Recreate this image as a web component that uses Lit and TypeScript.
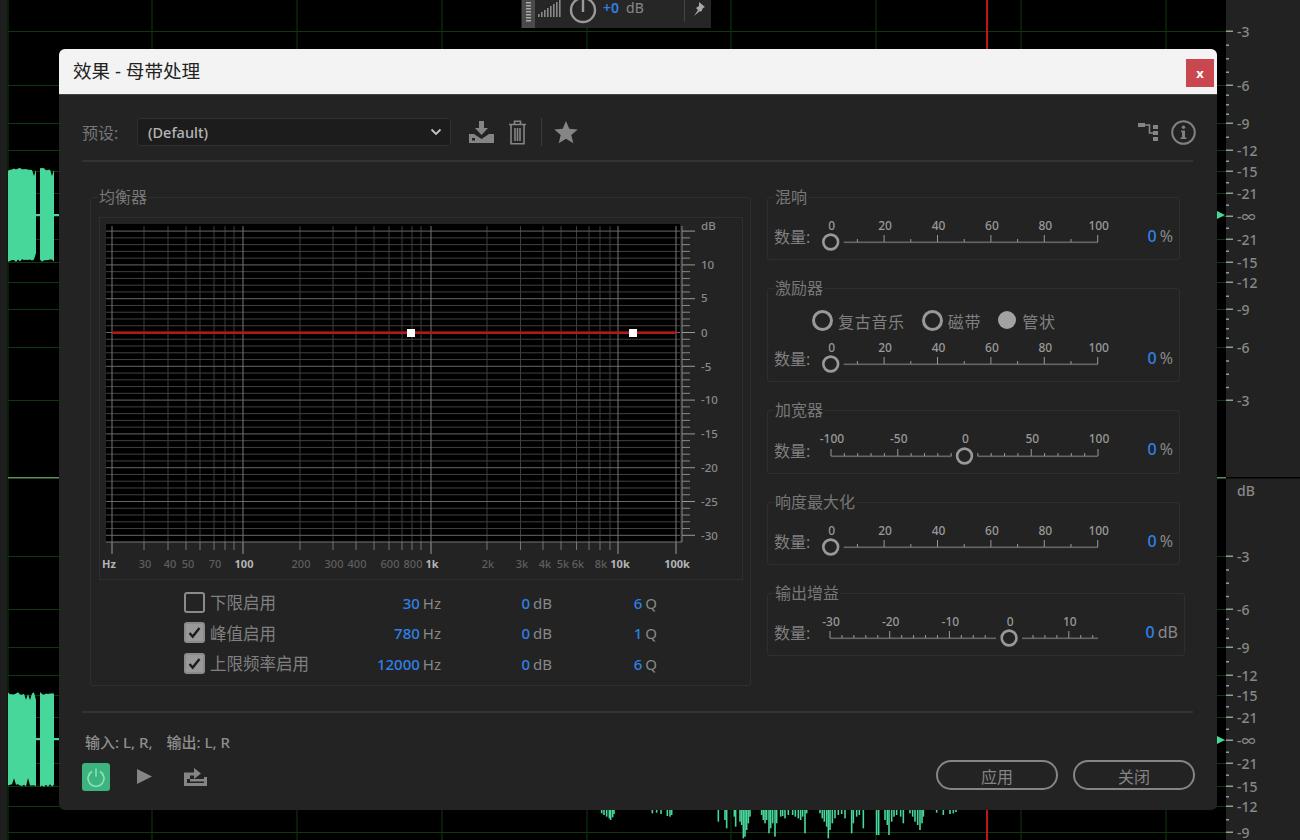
import { LitElement, html, css, svg } from "lit";
import { customElement } from "lit/decorators.js";

const rulerMajors: [number, string][] = [
  [31,"-3"],[85,"-6"],[123,"-9"],[150,"-12"],[171,"-15"],[193,"-21"],[216,"-∞"],[239,"-21"],[262,"-15"],[282,"-12"],[309,"-9"],[347,"-6"],[400,"-3"],
  [556,"-3"],[609,"-6"],[647,"-9"],[675,"-12"],[695,"-15"],[717,"-21"],[740,"-∞"],[763,"-21"],[786,"-15"],[806,"-12"],[832,"-9"],
];
const gridV = [7.5,151.5,296.5,441.5,586.5,730.5,875.5,1020.5,1165.5];

function jitter(i: number) { return Math.sin(i * 12.9898) * 43758.5453 % 1; }

function block(x0: number, x1: number, top: number, bottom: number, seed: number) {
  let up = "", down = "";
  let i = seed;
  for (let x = x0; x <= x1; x += 2) {
    const a = Math.abs(jitter(i++));
    const b = Math.abs(jitter(i++));
    up += `${x},${(top + a * 3 + (a > 0.93 ? 5 : 0)).toFixed(1)} `;
    down = `${x},${(bottom - b * 3 - (b > 0.93 ? 6 : 0)).toFixed(1)} ` + down;
  }
  return up + down;
}

const spikes: [number, number][] = [
  [35,40],[42,45],[50,50],[58,55],[62,60],[68,52],[72,42],
  [187,40],[200,38],[213,42],[232,48],[240,50],[245,45],
  [385,65],[405,60],[410,85],[433,50],[437,80],[450,65],[455,75],[460,115],[465,110],[470,90],[475,70],[480,50],
  [515,45],[520,60],[525,70],[530,60],[537,100],[542,85],[548,70],[555,110],[560,70],
  [572,50],[578,48],[585,55],[595,45],[608,45],[616,50],[625,55],[632,60],[638,50],[645,100],[650,40],
  [690,40],[697,55],[703,65],[710,80],[715,115],[720,90],[727,70],[735,55],[745,45],[755,42],[765,55],[785,100],[790,70],[800,50],[808,45],[820,85],
  [860,105],[866,105],[885,60],[892,75],[897,105],[905,65],[912,50],[920,45],[932,50],[940,70],[960,40],[968,50],[975,65],[983,75],[990,90],[996,70],[1000,50],
  [1040,38],[1060,45],[1080,42],[1090,40],[1098,36],
];

function scene() {
  const ticks = rulerMajors.map(([y, t]) => svg`
    <rect x="1226" y="${y - 0.5}" width="7" height="1.5" fill="#999"/>
    <text x="1237" y="${y + 6}" class="rl">${t}</text>`);
  const minors: unknown[] = [];
  for (let i = 0; i < rulerMajors.length - 1; i++) {
    const a = rulerMajors[i][0], b = rulerMajors[i + 1][0];
    if (b - a > 120) continue;
    const n = b - a > 30 ? 3 : 1;
    for (let k = 1; k <= n; k++) {
      minors.push(svg`<rect x="1226" y="${a + ((b - a) * k) / (n + 1)}" width="3" height="1.5" fill="#999"/>`);
    }
  }
  return html`<svg class="scene" viewBox="0 0 1300 840" width="1300" height="840" aria-hidden="true">
    <rect width="1300" height="840" fill="#000"/>
    <rect width="7" height="840" fill="#1e1e1e"/>
    ${rulerMajors.map(([y]) => svg`<rect x="8" y="${y}" width="1218" height="1" fill="#0d3a0d"/>`)}
    ${gridV.map((x) => svg`<rect x="${x}" y="0" width="1" height="840" fill="#0d3a0d"/>`)}
    <rect x="8" y="477" width="1218" height="1.5" fill="#5c8f5c"/>
    <rect x="986" y="0" width="2" height="840" fill="#c1151c"/>
    <polygon points="${block(8, 36, 168, 262, 1)}" fill="#47d79b"/>
    <polygon points="${block(40, 55, 168, 262, 61)}" fill="#47d79b"/>
    <polygon points="${block(8, 36, 692, 787, 91)}" fill="#47d79b"/>
    <polygon points="${block(40, 55, 692, 787, 151)}" fill="#47d79b"/>
    <rect x="36" y="214" width="24" height="2" fill="#47d79b"/>
    <rect x="36" y="738" width="24" height="2" fill="#47d79b"/>
    ${spikes.map(([px, py]) => svg`<rect x="${590 + px / 3 - 0.8}" y="808" width="1.6" height="${2 + (py - 30) / 3}" fill="#47d79b"/>`)}
    <polygon points="1217,211 1225,215 1217,219" fill="#47d79b"/>
    <polygon points="1217,736 1225,740 1217,744" fill="#47d79b"/>
    <rect x="1226" width="74" height="840" fill="#222"/>
    <rect x="1226" y="477" width="74" height="1.5" fill="#000"/>
    ${minors}
    ${ticks}
    <text x="1237" y="496" class="rl">dB</text>
    <rect x="521" width="190" height="28" fill="#262626"/>
    <rect x="522" width="13" height="28" fill="#4a4a4a"/>
    ${[2,5,8,11,14,17,20].map((y) => svg`<rect x="526" y="${y}" width="5" height="1.5" fill="#aaa"/>`)}
    ${[0,1,2,3,4,5,6,7].map((i) => svg`<rect x="${538 + i * 3}" y="${14 - i * 2}" width="1.6" height="${3 + i * 2}" fill="#888"/>`)}
    <circle cx="583" cy="10" r="12" fill="none" stroke="#999" stroke-width="2.4"/>
    <rect x="581.8" y="-2" width="2.4" height="14" fill="#999"/>
    <text x="603" y="13" class="tb"><tspan fill="#2f80e6" font-weight="600">+0</tspan><tspan fill="#888" dx="7">dB</tspan></text>
    <rect x="684" width="1" height="22" fill="#444"/>
    <path d="M699 2l6 5-2 1-2 4-1-1-6 5 4-6-2-2 3-2z" fill="#aaa"/>
  </svg>`;
}

type SliderCfg = { x0: number; per: number; min: number; max: number; minor: number; major: number; labels: number[]; value: number; thumbY?: number };

function slider(c: SliderCfg) {
  const y = c.thumbY ?? 24;
  const xOf = (v: number) => c.x0 + (v - c.min) * c.per;
  const thumbX = xOf(c.value);
  const end = 1098;
  const ticks: unknown[] = [];
  for (let v = c.min; v <= c.max + 0.01; v += c.minor) {
    const x = xOf(v);
    if (Math.abs(x - thumbX) < 13) continue;
    const maj = Math.abs(((v - c.min) % c.major)) < 0.01;
    ticks.push(svg`<rect x="${x - 0.5}" y="${y - (maj ? 7 : 3)}" width="1" height="${maj ? 7 : 3}" fill="#999"/>`);
  }
  return html`<svg class="slider" viewBox="820 0 290 ${y + 14}" width="290" height="${y + 14}" aria-hidden="true">
    ${thumbX - 13 > c.x0 ? svg`<rect x="${c.x0}" y="${y - 0.5}" width="${thumbX - 13 - c.x0}" height="1.6" fill="#666"/>` : ""}
    <rect x="${thumbX + 13}" y="${y - 0.5}" width="${end - thumbX - 13}" height="1.6" fill="#666"/>
    ${ticks}
    ${c.labels.map((v) => svg`<text x="${xOf(v) + 1}" y="12" text-anchor="middle" class="sl">${v}</text>`)}
    <circle cx="${thumbX}" cy="${y}" r="7.4" fill="#232323" stroke="#999" stroke-width="2.6"/>
  </svg>`;
}

const pct: SliderCfg = { x0: 830.7, per: 2.67, min: 0, max: 100, minor: 10, major: 20, labels: [0,20,40,60,80,100], value: 0 };
const wide: SliderCfg = { x0: 831, per: 1.335, min: -100, max: 100, minor: 10, major: 50, labels: [-100,-50,0,50,100], value: 0, thumbY: 25 };
const gain: SliderCfg = { x0: 830, per: 5.97, min: -30, max: 14.7, minor: 2, major: 10, labels: [-30,-20,-10,0,10], value: 0 };

function graph() {
  const dbY = (d: number) => 332.5 - d * 6.76;
  const minorF: number[] = [144,168,186,200,214,225,234,300,333,356,374,389,402,412,421,487,520.5,543,561,576.5,589,600,610];
  const majorF = [112,243,431,618,676];
  const hLines: unknown[] = [];
  const rTicks: unknown[] = [];
  for (let d = 15; d >= -30; d--) {
    const maj = d % 5 === 0;
    const y = dbY(d);
    hLines.push(svg`<rect x="106" y="${y - 0.5}" width="574" height="1" fill="${maj ? "#666" : "#414141"}"/>`);
    rTicks.push(svg`<rect x="682" y="${y - 0.5}" width="${maj ? 13 : 8}" height="1" fill="${maj ? "#999" : "#888"}"/>`);
  }
  const labels: [number, string, boolean][] = [
    [109,"Hz",true],[145,"30",false],[170,"40",false],[188,"50",false],[215,"70",false],[244,"100",true],[301,"200",false],[334,"300",false],[357,"400",false],[390,"600",false],[413,"800",false],[432,"1k",true],[488,"2k",false],[522,"3k",false],[545,"4k",false],[563,"5k",false],[578,"6k",false],[601,"8k",false],[620,"10k",true],[677,"100k",true],
  ];
  const dbLabels: [number, string][] = [[230,"dB"],[268.5,"10"],[301.5,"5"],[336.5,"0"],[370.5,"-5"],[403.5,"-10"],[437.5,"-15"],[471.5,"-20"],[505.5,"-25"],[539.5,"-30"]];
  return html`<svg class="graph" viewBox="100 218 642 361" width="642" height="361" aria-hidden="true">
    <rect x="106" y="224" width="574" height="318" fill="#000"/>
    ${minorF.map((x) => svg`<rect x="${x - 0.5}" y="226" width="1" height="316" fill="#3d3d3d"/>
      <rect x="${x - 0.5}" y="542" width="1" height="8" fill="#777"/>`)}
    ${hLines}
    ${majorF.map((x) => svg`<rect x="${x - 0.5}" y="226" width="1" height="316" fill="#777"/>
      <rect x="${x - 0.5}" y="542" width="1" height="12" fill="#999"/>`)}
    <rect x="106" y="541.5" width="576" height="1" fill="#777"/>
    <rect x="681.5" y="226" width="1" height="316" fill="#888"/>
    ${rTicks}
    <rect x="112" y="331.4" width="564" height="2.6" fill="#b3191c"/>
    <rect x="407" y="329" width="8" height="8" fill="#fff"/>
    <rect x="629" y="329" width="8" height="8" fill="#fff"/>
    ${labels.map(([x, t, b]) => svg`<text x="${x}" y="568" text-anchor="middle" class="${b ? "gx maj" : "gx"}">${t}</text>`)}
    ${dbLabels.map(([y, t]) => svg`<text x="701" y="${y}" class="gy">${t}</text>`)}
  </svg>`;
}

@customElement("app-root")
export class AppRoot extends LitElement {
  static styles = css`
    :host { display: block; width: 1300px; height: 840px; position: relative; overflow: hidden; background: #000;
      font-family: "Noto Sans", "Noto Sans CJK SC", sans-serif; color: #888; }
    .scene { position: absolute; left: 0; top: 0; }
    .scene .rl { font-size: 14px; font-weight: 500; fill: #888; }
    .scene .tb { font-size: 14px; }
    .dialog { position: absolute; left: 59px; top: 49px; width: 1158px; height: 761px; background: #232323; border-radius: 6px;
      display: flex; flex-direction: column; overflow: hidden; }
    .title { height: 46px; flex: none; box-sizing: border-box; background: #f3f3f3; border-bottom: 1px solid #444; display: flex; align-items: center;
      justify-content: space-between; padding: 0 3px 0 14px; font-size: 18.6px; color: #222; }
    .title span { padding-bottom: 4px; }
    .close { width: 28px; height: 28px; margin-top: 2px; background: #c9484f; color: #fff; font-size: 13px; font-weight: 700; display: flex; align-items: center; justify-content: center; }
    .body { flex: 1; display: flex; flex-direction: column; padding: 23px 24px 19px 23px; min-height: 0; }
    .preset { display: flex; align-items: center; height: 28px; padding-bottom: 14px; border-bottom: 2px solid #333; flex: none; box-sizing: content-box; }
    .preset .lab { width: 55px; font-size: 16px; color: #777; }
    .select { width: 314px; height: 28px; box-sizing: border-box; background: #1c1c1c; border: 1px solid #2f2f2f; border-radius: 3px; display: flex; align-items: center;
      justify-content: space-between; padding: 0 8px 0 10px; font-size: 14.5px; color: #b5b5b5; font-weight: 500; }
    .tools { display: flex; align-items: center; gap: 14px; margin-left: 18px; flex: 1; }
    .vsep { width: 1px; height: 28px; background: #383838; margin-right: -2px; }
    .spacer { flex: 1; }
    .info { margin: 0 -3px 0 -2px; }
    .main { display: flex; gap: 16px; margin-top: 35px; padding-left: 8px; flex: none; }
    .group { position: relative; border: 1px solid #2f2f2f; border-radius: 3px; box-sizing: border-box; }
    .legend { position: absolute; left: 6px; top: -12px; background: #232323; padding: 0 1px; font-size: 16px; line-height: 22px; color: #777; }
    .eq > .legend { left: 7px; }
    .eq { width: 661px; height: 489px; padding: 19px 7px 0 8px; }
    .panel { width: 644px; height: 363px; box-sizing: border-box; border: 1px solid #2f2f2f; }
    .graph { display: block; }
    .graph .gx { font-size: 11px; fill: #5f5f5f; font-weight: 500; }
    .graph .gx.maj { fill: #b5b5b5; font-weight: 700; }
    .graph .gy { font-size: 11.5px; fill: #8a8a8a; font-weight: 500; }
    .eqrows { display: grid; grid-template-columns: 151px 106px 111px 105px; grid-auto-rows: 30.5px; margin: 7px 0 0 85px; align-items: center; }
    .eqrows .val { padding-top: 1px; }
    .check { display: flex; align-items: center; gap: 5px; font-size: 16.5px; color: #808080; white-space: nowrap; }
    .box { width: 21px; height: 21px; box-sizing: border-box; border: 2px solid #8a8a8a; border-radius: 3px; flex: none; }
    .box.on { background: #999; display: flex; align-items: center; justify-content: center; }
    .val { display: flex; justify-content: flex-end; align-items: baseline; gap: 3px; }
    .num { color: #2f80e6; font-size: 15px; font-weight: 500; }
    .unit { color: #888; font-size: 15px; }
    .col { display: flex; flex-direction: column; gap: 28px; width: 418px; }
    .fx { width: 413px; padding: 20px 0 3px 6px; }
    .fx.wide { width: 418px; }
    .row { display: flex; align-items: center; }
    .row .lab { width: 46px; font-size: 16px; color: #808080; white-space: nowrap; padding-bottom: 2px; }
    .row .val { flex: 1; padding: 0 6px 3px 0; }
    .row .val .unit, .row .val .num { font-size: 16px; }
    .slider { display: block; flex: none; }
    .slider .sl { font-size: 12px; fill: #999; font-weight: 500; }
    .radios { display: flex; align-items: center; height: 22px; padding: 0 0 9px 38px; font-size: 16px; color: #808080; }
    .ring { width: 21px; height: 21px; box-sizing: border-box; border: 3px solid #999; border-radius: 50%; margin-right: 5px; flex: none; }
    .dot { width: 18px; height: 18px; border-radius: 50%; background: #a2a2a2; margin-right: 6px; flex: none; }
    .radios span.t { margin-right: 17px; padding-top: 2px; letter-spacing: 0.7px; white-space: nowrap; }
    .hr { height: 2px; background: #333; margin-top: 25px; flex: none; }
    .io { display: flex; gap: 14px; margin: 19px 0 0 3px; height: 20px; line-height: 20px; font-size: 15px; font-weight: 500; color: #8e8e8e; white-space: pre; }
    .foot { display: flex; align-items: flex-start; margin-top: 8px; height: 31px; flex: none; }
    .power { width: 28px; height: 28px; margin-top: 3px; background: #3db47f; border-radius: 3px; display: flex; align-items: center; justify-content: center; }
    .play { margin: 9px 0 0 27px; display: block; }
    .exp { margin: 8px 0 0 32px; display: block; }
    .btn { width: 122px; height: 30px; box-sizing: border-box; border: 2px solid #858585; border-radius: 15px; display: flex; align-items: center; justify-content: center;
      font-size: 16px; color: #858585; margin-left: 15px; padding-top: 2px; }
    .btn.last { margin-right: -2px; }
  `;

  private radio() {
    return html`<div class="radios">
      <div class="ring"></div><span class="t">复古音乐</span>
      <div class="ring"></div><span class="t">磁带</span>
      <div class="dot"></div><span class="t">管状</span>
    </div>`;
  }

  private fxRow(c: SliderCfg, unit: string) {
    return html`<div class="row">
      <div class="lab">数量:</div>
      ${slider(c)}
      <div class="val"><span class="num">0</span><span class="unit">${unit}</span></div>
    </div>`;
  }

  private eqRow(label: string, on: boolean, a: string, q: string) {
    return html`
      <div class="check">
        <div class="box ${on ? "on" : ""}">
          ${on ? html`<svg width="15" height="15" viewBox="0 0 15 15" aria-hidden="true"><path d="M2.5 8l3.2 3.6L12.5 3" fill="none" stroke="#1d1d1d" stroke-width="2.4"/></svg>` : ""}
        </div>${label}
      </div>
      <div class="val"><span class="num">${a}</span><span class="unit">Hz</span></div>
      <div class="val"><span class="num">0</span><span class="unit">dB</span></div>
      <div class="val"><span class="num">${q}</span><span class="unit">Q</span></div>`;
  }

  render() {
    return html`
      ${scene()}
      <div class="dialog">
        <div class="title"><span>效果 - 母带处理</span><div class="close">x</div></div>
        <div class="body">
          <div class="preset">
            <div class="lab">预设:</div>
            <div class="select"><span>(Default)</span>
              <svg width="12" height="8" viewBox="0 0 12 8" aria-hidden="true"><path d="M1.5 1.5L6 6l4.5-4.5" fill="none" stroke="#c4c4c4" stroke-width="1.8"/></svg>
            </div>
            <div class="tools">
              <svg width="25" height="22" viewBox="0 0 25 22" aria-hidden="true"><path d="M10 0h5v7h4l-6.500 7L6 7h4z M0 22V13h5l7.500 5 7.500-5h5v9z" fill="#858585"/><rect x="3" y="17" width="3" height="2.500" fill="#232323"/></svg>
              <svg width="19" height="25" viewBox="0 0 19 25" aria-hidden="true"><path d="M1 4.500h17M6.500 4V1.200h6V4M3 5v18.800h13V5M7 8v13M9.500 8v13M12 8v13" fill="none" stroke="#858585" stroke-width="1.600"/></svg>
              <div class="vsep"></div>
              <svg width="24" height="23" viewBox="0 0 24 23" aria-hidden="true"><path d="M12 0l3.300 7.800 8.400.7-6.400 5.500 2 8.200L12 17.800l-7.300 4.400 2-8.200L.3 8.500l8.400-.7z" fill="#858585"/></svg>
              <div class="spacer"></div>
              <svg width="21" height="19" viewBox="0 0 21 19" aria-hidden="true"><path d="M0 0h7v4H0zM15 2h5v4h-5zM15 8h5v4h-5zM15 14h5v4h-5z" fill="#858585"/><path d="M7 2h4.500v8H15" fill="none" stroke="#858585" stroke-width="1.600"/></svg>
              <svg class="info" width="25" height="25" viewBox="0 0 25 25" aria-hidden="true"><circle cx="12.500" cy="12.500" r="11.300" fill="none" stroke="#808080" stroke-width="2"/><circle cx="12.500" cy="7.300" r="1.700" fill="#808080"/><path d="M10 10.500h4v7h1.500v1.600h-6v-1.600H11v-5.400h-1z" fill="#808080"/></svg>
            </div>
          </div>
          <div class="main">
            <div class="group eq">
              <div class="legend">均衡器</div>
              <div class="panel">${graph()}</div>
              <div class="eqrows">
                ${this.eqRow("下限启用", false, "30", "6")}
                ${this.eqRow("峰值启用", true, "780", "1")}
                ${this.eqRow("上限频率启用", true, "12000", "6")}
              </div>
            </div>
            <div class="col">
              <div class="group fx"><div class="legend">混响</div>${this.fxRow(pct, "%")}</div>
              <div class="group fx"><div class="legend">激励器</div>${this.radio()}${this.fxRow(pct, "%")}</div>
              <div class="group fx"><div class="legend">加宽器</div>${this.fxRow(wide, "%")}</div>
              <div class="group fx"><div class="legend">响度最大化</div>${this.fxRow(pct, "%")}</div>
              <div class="group fx wide"><div class="legend">输出增益</div>${this.fxRow(gain, "dB")}</div>
            </div>
          </div>
          <div class="hr"></div>
          <div class="io"><span>输入: L, R,</span><span>输出: L, R</span></div>
          <div class="foot">
            <div class="power"><svg width="20" height="20" viewBox="0 0 20 20" aria-hidden="true"><path d="M6 4.500a8 8 0 1 0 8 0" fill="none" stroke="#8fe3bb" stroke-width="1.500"/><path d="M10 1.500v8" stroke="#8fe3bb" stroke-width="1.500"/></svg></div>
            <svg class="play" width="15" height="15" viewBox="0 0 15 15" aria-hidden="true"><path d="M0 0l15 7.500L0 15z" fill="#858585"/></svg>
            <svg class="exp" width="23" height="18" viewBox="0 0 23 18" aria-hidden="true"><path d="M1.500 6v10.500h20V9" fill="none" stroke="#858585" stroke-width="3"/><path d="M0 4.500h10V0l7 5.500-7 5.500V7.500H6V11H0z M6 11h14v2.500H6z" fill="#858585"/></svg>
            <div class="spacer"></div>
            <div class="btn">应用</div>
            <div class="btn last">关闭</div>
          </div>
        </div>
      </div>`;
  }
}
